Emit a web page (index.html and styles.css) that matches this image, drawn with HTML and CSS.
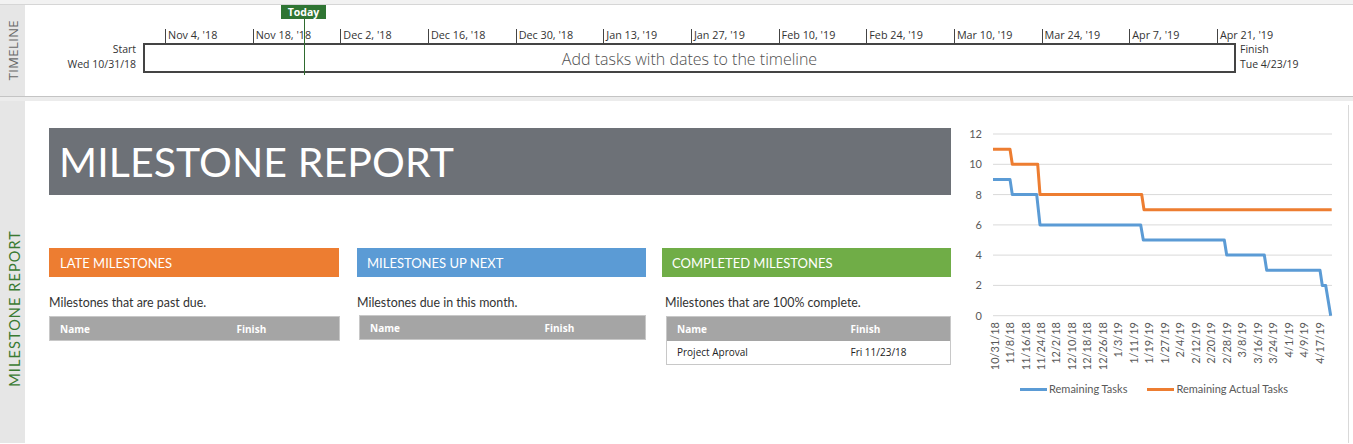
FILE: index.html
```html
<!DOCTYPE html>
<html>
<head>
<meta charset="utf-8">
<title>Milestone Report</title>
<link rel="stylesheet" href="styles.css">
</head>
<body>
<div class="topstrip"></div>
<section class="timeline">
  <div class="side side-timeline"><span class="side-label">TIMELINE</span></div>
  <div class="tl-body">
    <div class="today">Today</div>
    <div class="today-line"></div>
    <div class="scale">
      <div class="tick">Nov 4, '18</div>
      <div class="tick">Nov 18, '18</div>
      <div class="tick">Dec 2, '18</div>
      <div class="tick">Dec 16, '18</div>
      <div class="tick">Dec 30, '18</div>
      <div class="tick">Jan 13, '19</div>
      <div class="tick">Jan 27, '19</div>
      <div class="tick">Feb 10, '19</div>
      <div class="tick">Feb 24, '19</div>
      <div class="tick">Mar 10, '19</div>
      <div class="tick">Mar 24, '19</div>
      <div class="tick">Apr 7, '19</div>
      <div class="tick">Apr 21, '19</div>
    </div>
    <div class="tl-row">
      <div class="tl-start">Start<br>Wed 10/31/18</div>
      <div class="tl-box">Add tasks with dates to the timeline</div>
      <div class="tl-finish">Finish<br>Tue 4/23/19</div>
    </div>
  </div>
</section>
<div class="divider"></div>
<section class="report">
  <div class="side side-report"><span class="side-label">MILESTONE REPORT</span></div>
  <div class="report-body">
    <div class="report-main">
      <div class="banner">MILESTONE REPORT</div>
      <div class="cols">
        <div class="col col-1">
          <div class="col-head head-orange">LATE MILESTONES</div>
          <p class="col-desc">Milestones that are past due.</p>
          <table class="mtable">
            <tr><th class="c-name">Name</th><th class="c-finish">Finish</th></tr>
          </table>
        </div>
        <div class="col col-2">
          <div class="col-head head-blue">MILESTONES UP NEXT</div>
          <p class="col-desc">Milestones due in this month.</p>
          <table class="mtable mtable-2">
            <tr><th class="c-name">Name</th><th class="c-finish">Finish</th></tr>
          </table>
        </div>
        <div class="col col-3">
          <div class="col-head head-green">COMPLETED MILESTONES</div>
          <p class="col-desc col-desc-3">Milestones that are 100% complete.</p>
          <table class="mtable mtable-3">
            <tr><th class="c-name">Name</th><th class="c-finish">Finish</th></tr>
            <tr><td class="c-name">Project Aproval</td><td class="c-finish">Fri 11/23/18</td></tr>
          </table>
        </div>
      </div>
    </div>
    <div class="chart">
      <svg class="chart-svg" width="394" height="262" viewBox="0 0 394 262">
        <g class="grid">
          <line x1="38" y1="15.0" x2="377" y2="15.0"/>
          <line x1="38" y1="45.3" x2="377" y2="45.3"/>
          <line x1="38" y1="75.6" x2="377" y2="75.6"/>
          <line x1="38" y1="105.9" x2="377" y2="105.9"/>
          <line x1="38" y1="136.1" x2="377" y2="136.1"/>
          <line x1="38" y1="166.4" x2="377" y2="166.4"/>
          <line x1="38" y1="196.7" x2="377" y2="196.7"/>
        </g>
        <g class="ylab">
          <text x="27" y="19">12</text>
          <text x="27" y="49.3">10</text>
          <text x="27" y="79.6">8</text>
          <text x="27" y="109.9">6</text>
          <text x="27" y="140.1">4</text>
          <text x="27" y="170.4">2</text>
          <text x="27" y="200.7">0</text>
        </g>
        <path class="s-orange" d="M38 30.2 L55 30.2 L57.3 45.3 L82.7 45.3 L85 75.6 L186.7 75.6 L189 90.7 L376.7 90.7"/>
        <path class="s-blue" d="M38 60.4 L55 60.4 L57.3 75.6 L81.7 75.6 L85 105.9 L185.7 105.9 L188.3 121 L269.3 121 L271.7 136.1 L309.3 136.1 L311.7 151.3 L365 151.3 L367.3 166.4 L370.7 166.4 L375.7 196.7"/>
        <g class="xlab">
          <text transform="translate(43.5 203) rotate(-90)">10/31/18</text>
          <text transform="translate(59.0 203) rotate(-90)">11/8/18</text>
          <text transform="translate(74.5 203) rotate(-90)">11/16/18</text>
          <text transform="translate(89.9 203) rotate(-90)">11/24/18</text>
          <text transform="translate(105.4 203) rotate(-90)">12/2/18</text>
          <text transform="translate(120.9 203) rotate(-90)">12/10/18</text>
          <text transform="translate(136.4 203) rotate(-90)">12/18/18</text>
          <text transform="translate(151.8 203) rotate(-90)">12/26/18</text>
          <text transform="translate(167.3 203) rotate(-90)">1/3/19</text>
          <text transform="translate(182.8 203) rotate(-90)">1/11/19</text>
          <text transform="translate(198.3 203) rotate(-90)">1/19/19</text>
          <text transform="translate(213.7 203) rotate(-90)">1/27/19</text>
          <text transform="translate(229.2 203) rotate(-90)">2/4/19</text>
          <text transform="translate(244.7 203) rotate(-90)">2/12/19</text>
          <text transform="translate(260.2 203) rotate(-90)">2/20/19</text>
          <text transform="translate(275.6 203) rotate(-90)">2/28/19</text>
          <text transform="translate(291.1 203) rotate(-90)">3/8/19</text>
          <text transform="translate(306.6 203) rotate(-90)">3/16/19</text>
          <text transform="translate(322.1 203) rotate(-90)">3/24/19</text>
          <text transform="translate(337.5 203) rotate(-90)">4/1/19</text>
          <text transform="translate(353.0 203) rotate(-90)">4/9/19</text>
          <text transform="translate(368.5 203) rotate(-90)">4/17/19</text>
        </g>
      </svg>
      <div class="legend">
        <div class="legend-item"><span class="swatch swatch-blue"></span>Remaining Tasks</div>
        <div class="legend-item"><span class="swatch swatch-orange"></span>Remaining Actual Tasks</div>
      </div>
    </div>
  </div>
</section>
</body>
</html>
```
FILE: styles.css
```css
* { box-sizing: border-box; }
html, body { margin: 0; padding: 0; background: #ffffff; }
body {
  width: 1353px;
  height: 444px;
  overflow: hidden;
  font-family: "Open Sans", "Noto Sans", sans-serif;
  color: #333;
}

.topstrip {
  height: 5px;
  background: #f2f2f2;
  border-bottom: 1px solid #d6d6d6;
}

/* ---------- side bars ---------- */
.side {
  width: 25px;
  flex: none;
  background: #e6e6e6;
  display: flex;
  justify-content: center;
}
.side-label {
  writing-mode: vertical-rl;
  transform: rotate(180deg);
  white-space: nowrap;
}
.side-timeline { align-items: center; }
.side-timeline .side-label {
  font-size: 13px;
  color: #6a6a6a;
  letter-spacing: 0.4px;
}
.side-report { align-items: flex-start; padding-top: 129px; }
.side-report .side-label {
  font-family: "Lato", "Open Sans", sans-serif;
  font-size: 14.5px;
  color: #3a7a32;
  letter-spacing: 1.1px;
  margin-left: 3px;
}

/* ---------- timeline ---------- */
.timeline {
  display: flex;
  height: 91px;
}
.tl-body {
  position: relative;
  flex: 1;
  padding-top: 23px;
}
.today {
  position: absolute;
  left: 256px;
  top: 0;
  width: 45px;
  height: 14px;
  background: #2f7533;
  color: #fff;
  font-size: 10.5px;
  font-weight: 700;
  line-height: 14px;
  text-align: center;
}
.today-line {
  position: absolute;
  left: 279px;
  top: 14px;
  width: 1px;
  height: 56px;
  background: #2f6b2f;
}
.scale {
  display: flex;
  padding-left: 140px;
  height: 15px;
}
.tick {
  width: 87.67px;
  flex: none;
  border-left: 1px solid #444;
  padding-left: 2px;
  font-size: 10.8px;
  line-height: 12px;
  color: #333;
  white-space: nowrap;
  margin-top: 1px;
}
.tl-row {
  display: flex;
  align-items: flex-start;
}
.tl-start, .tl-finish {
  font-size: 10.5px;
  line-height: 15px;
  color: #333;
  margin-top: -1px;
  white-space: nowrap;
}
.tl-start {
  width: 111px;
  text-align: right;
  margin-right: 7px;
}
.tl-finish { margin-left: 4px; }
.tl-box {
  width: 1093px;
  height: 30px;
  border: 2px solid #444;
  display: flex;
  align-items: center;
  justify-content: center;
  padding-top: 2px;
  font-size: 16px;
  font-weight: 300;
  color: #505050;
}

.divider {
  height: 5px;
  border-top: 1px solid #c4c4c4;
  background: #ececec;
}

/* ---------- report ---------- */
.report {
  display: flex;
  height: 342px;
}
.report-body {
  flex: 1;
  display: flex;
}
.report-main {
  width: 930px;
  padding: 27px 0 0 24px;
  font-family: "Lato", "Open Sans", sans-serif;
}
.banner {
  width: 902px;
  height: 67px;
  background: #6d7177;
  color: #fff;
  font-size: 41px;
  font-weight: 400;
  padding-left: 10px;
  display: flex;
  align-items: center;
  letter-spacing: 0.1px;
}
.cols {
  display: flex;
  margin-top: 53px;
  width: 902px;
}
.col { flex: none; }
.col-1 { width: 290px; }
.col-2 { width: 289px; margin-left: 18px; }
.col-3 { width: 289px; margin-left: 16px; }
.col-head {
  height: 29px;
  color: #fff;
  font-size: 13px;
  padding-left: 11px;
  display: flex;
  align-items: center;
}
.col-2 .col-head { padding-left: 10px; }
.col-3 .col-head { padding-left: 10px; }
.head-orange { background: #ed7d31; }
.head-blue { background: #5b9bd5; }
.head-green { background: #70ad47; }
.col-desc {
  margin: 0;
  padding-top: 18px;
  height: 39px;
  font-size: 12.4px;
  line-height: 15px;
  color: #333;
}
.col-2 .col-desc { height: 38px; }
.col-desc-3 { padding-left: 3px; }
.mtable {
  border-collapse: collapse;
  width: 291px;
  font-family: "Open Sans", "Noto Sans", sans-serif;
  font-size: 10px;
  border: 1px solid #c8c8c8;
}
.mtable-2 { margin-left: 2px; width: 287px; }
.mtable-3 { margin-left: 4px; width: 285px; }
.mtable th {
  background: #a5a5a5;
  color: #fff;
  font-weight: 700;
  text-align: left;
  height: 24px;
  padding: 0;
  border: none;
}
.mtable td {
  height: 24px;
  padding: 0;
  color: #222;
  border: none;
}
.mtable .c-name { padding-left: 10px; width: 187px; }
.mtable-2 .c-name { width: 185px; }
.mtable-3 .c-name { width: 184px; }

/* ---------- chart ---------- */
.chart {
  width: 394px;
  margin-top: 4px;
  padding-top: 14px;
  border-right: 1px solid #d9d9d9;
  font-family: "Lato", "Open Sans", sans-serif;
}
.chart-svg { display: block; }
.grid line { stroke: #d9d9d9; stroke-width: 1; }
.ylab text {
  font-size: 11px;
  fill: #595959;
  text-anchor: end;
  font-family: "Lato", sans-serif;
}
.xlab text {
  font-size: 11px;
  fill: #595959;
  text-anchor: end;
  font-family: "Lato", sans-serif;
}
.s-blue, .s-orange { fill: none; stroke-width: 3; stroke-linejoin: round; }
.s-blue { stroke: #5b9bd5; }
.s-orange { stroke: #ed7d31; }
.legend {
  display: flex;
  gap: 20px;
  padding-left: 65px;
  margin-top: 1px;
  font-size: 11px;
  color: #595959;
  line-height: 14px;
}
.legend-item { display: flex; align-items: center; }
.swatch {
  width: 27px;
  height: 3px;
  margin-right: 2px;
}
.swatch-blue { background: #5b9bd5; }
.swatch-orange { background: #ed7d31; }
```
